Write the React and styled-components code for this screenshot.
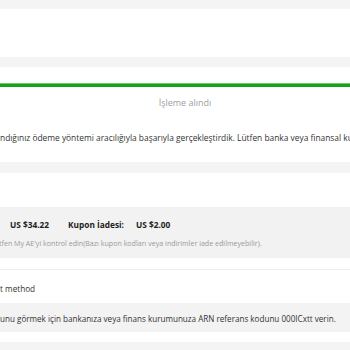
import styled, { createGlobalStyle } from 'styled-components';

const GlobalStyle = createGlobalStyle`
    html, body {
        margin: 0;
        padding: 0;
        background: #fff;
        overflow: hidden;
    }
    body {
        font-family: "Open Sans", "Noto Sans", sans-serif;
        color: #333;
    }
`;

const Page = styled.div`
    width: 350px;
    height: 350px;
    overflow: hidden;
    display: flex;
    flex-direction: column;
`;

const Band = styled.div`
    flex: none;
    height: ${p => p.h}px;
    background: ${p => p.bg || '#f4f4f4'};
`;

const Gap = styled.div`
    flex: none;
    height: ${p => p.h}px;
`;

const Progress = styled.div`
    flex: none;
    box-sizing: border-box;
    height: 4px;
    background: #19a319;
    border-top: 1px solid #6cc96c;
`;

const Status = styled.div`
    flex: none;
    display: flex;
    justify-content: center;
    box-sizing: border-box;
    padding: 9px 0 0 20px;
    height: 23px;
    font-size: 9px;
    line-height: 14px;
    color: #a0a0a0;
`;

const Line = styled.div`
    flex: none;
    white-space: nowrap;
    font-size: ${p => p.size || 8.2}px;
    line-height: 14px;
    color: #333;
`;

const Summary = styled.div`
    flex: none;
    height: 51px;
    background: #f2f2f2;
    display: flex;
    flex-direction: column;
    padding-top: 10px;
    box-sizing: border-box;
`;

const Amounts = styled.div`
    display: flex;
    align-items: center;
    padding-left: 10px;
    height: 14px;
    font-size: 8.3px;
    font-weight: 700;
    color: #222;
    white-space: nowrap;
`;

const Amount = styled.span`
    margin-right: ${p => p.mr}px;
`;

const Note = styled.div`
    margin-top: 7px;
    font-size: 7.1px;
    line-height: 10px;
    color: #9a9a9a;
    white-space: nowrap;
    text-indent: -1px;
`;

const Divider = styled.div`
    flex: none;
    height: 1px;
    background: #ededed;
`;

const Info = styled.div`
    flex: none;
    height: 29px;
    background: #f3f3f3;
    display: flex;
    align-items: center;
    padding-top: 1px;
    box-sizing: border-box;
    font-size: 8.1px;
    color: #333;
    white-space: nowrap;
`;

export default function App() {
    return (
        <>
            <GlobalStyle />
            <Page>
                <Band h={9} />
                <Gap h={48} />
                <Band h={10} />
                <Gap h={16} />
                <Progress />
                <Status>İşleme alındı</Status>
                <Gap h={21} />
                <Line size={8.4}>ndığınız ödeme yöntemi aracılığıyla başarıyla gerçekleştirdik. Lütfen banka veya finansal kurumunuzla iletişime geçin.</Line>
                <Gap h={17} />
                <Band h={11} />
                <Gap h={34} />
                <Summary>
                    <Amounts>
                        <Amount mr={19}>US $34.22</Amount>
                        <Amount mr={12}>Kupon İadesi:</Amount>
                        <Amount mr={0}>US $2.00</Amount>
                    </Amounts>
                    <Note>tfen My AE'yi kontrol edin(Bazı kupon kodları veya indirimler iade edilmeyebilir).</Note>
                </Summary>
                <Gap h={11} />
                <Divider />
                <Gap h={12} />
                <Line>t method</Line>
                <Gap h={7} />
                <Info>unu görmek için bankanıza veya finans kurumunuza ARN referans kodunu 000ICxtt verin.</Info>
                <Gap h={10} />
                <Band h={8} />
            </Page>
        </>
    );
}
